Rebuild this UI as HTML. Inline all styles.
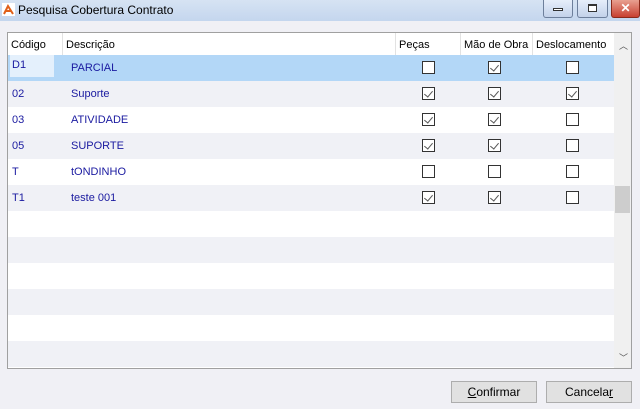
<!DOCTYPE html><html><head><style>
*{margin:0;padding:0;box-sizing:border-box}
body{width:640px;height:409px;background:#f0f0f5;font-family:"Liberation Sans",sans-serif;font-size:11px;position:relative;overflow:hidden}
.tb{position:absolute;left:0;top:0;width:640px;height:21px;background:linear-gradient(#d6e3f3,#c4d6ee)}
.tb span{position:absolute;left:18px;top:3px;font-size:12px;color:#000}
.wb{position:absolute;top:0;height:18px;border:1px solid #6d7f9b;border-top:none;border-radius:0 0 3px 3px;background:linear-gradient(#e6eefa,#c3d2ea)}
.grid{position:absolute;left:7px;top:32px;width:625px;height:337px;border:1px solid #a0a0a0;background:#fff;overflow:hidden}
.hd{position:absolute;top:0;height:22px;line-height:24px;padding-left:3px;color:#000;border-right:1px solid #e2e2e2}
.row{position:absolute;left:0;width:606px;height:26px}
.t{position:absolute;top:7px;color:#1a1aa0}
.cb{position:absolute;top:6px;width:13px;height:13px;border:1px solid #333;background:#fff}
.cb.c::after{content:"";position:absolute;left:3px;top:1px;width:4px;height:7px;border:solid #555;border-width:0 1px 1px 0;transform:rotate(40deg)}
.sb{position:absolute;left:606px;top:0;width:17px;height:335px;background:#f0f0f0}
.btn{position:absolute;top:381px;height:22px;border:1px solid #adadad;background:#e1e1e1;text-align:center;line-height:20px;font-size:12px}
</style></head><body>
<div class="tb"><svg style="position:absolute;left:2px;top:3px" width="13" height="13"><rect width="13" height="13" fill="#fff"/><path d="M2 11L6 3L11 11M4 8h5" stroke="#e0601a" stroke-width="2" fill="none"/></svg><span>Pesquisa Cobertura Contrato</span></div>
<div class="wb" style="left:543px;width:30px"><div style="position:absolute;left:9px;top:8px;width:10px;height:3px;border:1px solid #333;background:#fff"></div></div>
<div class="wb" style="left:577px;width:31px"><div style="position:absolute;left:10px;top:4px;width:9px;height:8px;border:1px solid #333;border-top-width:2px;background:#fff"></div></div>
<div class="wb" style="left:611px;width:29px;background:linear-gradient(#e8a090,#c84030);border-color:#8a2a1a;color:#fff;font-weight:bold;text-align:center;font-size:12px;line-height:16px">✕</div>
<div class="grid">
<div class="hd" style="left:0;width:55px">Código</div>
<div class="hd" style="left:55px;width:333px">Descrição</div>
<div class="hd" style="left:388px;width:65px">Peças</div>
<div class="hd" style="left:453px;width:72px">Mão de Obra</div>
<div class="hd" style="left:525px;width:81px;border:none">Deslocamento</div>
<div class="row" style="top:22px;background:#b3d7f7"><div style="position:absolute;left:2px;top:0;width:44px;height:22px;background:#e4f0fc"></div><span class="t" style="left:4px;top:4px">D1</span><span class="t" style="left:63px">PARCIAL</span><div class="cb" style="left:414px"></div><div class="cb c" style="left:480px"></div><div class="cb" style="left:558px"></div></div>
<div class="row" style="top:48px;background:#f0f1f6"><span class="t" style="left:4px">02</span><span class="t" style="left:63px">Suporte</span><div class="cb c" style="left:414px"></div><div class="cb c" style="left:480px"></div><div class="cb c" style="left:558px"></div></div>
<div class="row" style="top:74px"><span class="t" style="left:4px">03</span><span class="t" style="left:63px">ATIVIDADE</span><div class="cb c" style="left:414px"></div><div class="cb c" style="left:480px"></div><div class="cb" style="left:558px"></div></div>
<div class="row" style="top:100px;background:#f0f1f6"><span class="t" style="left:4px">05</span><span class="t" style="left:63px">SUPORTE</span><div class="cb c" style="left:414px"></div><div class="cb c" style="left:480px"></div><div class="cb" style="left:558px"></div></div>
<div class="row" style="top:126px"><span class="t" style="left:4px">T</span><span class="t" style="left:63px">tONDINHO</span><div class="cb" style="left:414px"></div><div class="cb" style="left:480px"></div><div class="cb" style="left:558px"></div></div>
<div class="row" style="top:152px;background:#f0f1f6"><span class="t" style="left:4px">T1</span><span class="t" style="left:63px">teste 001</span><div class="cb c" style="left:414px"></div><div class="cb c" style="left:480px"></div><div class="cb" style="left:558px"></div></div>
<div class="row" style="top:204px;background:#f0f1f6"></div>
<div class="row" style="top:256px;background:#f0f1f6"></div>
<div class="row" style="top:308px;background:#f0f1f6"></div>
<div class="sb"><div style="position:absolute;left:1px;top:153px;width:15px;height:27px;background:#cdcdcd"></div><div style="position:absolute;left:5px;top:6px;font-size:9px;color:#555">︿</div><div style="position:absolute;left:5px;top:318px;font-size:9px;color:#555">﹀</div></div>
</div>
<div class="btn" style="left:451px;width:86px"><u>C</u>onfirmar</div>
<div class="btn" style="left:546px;width:86px">Cancela<u>r</u></div>
</body></html>
